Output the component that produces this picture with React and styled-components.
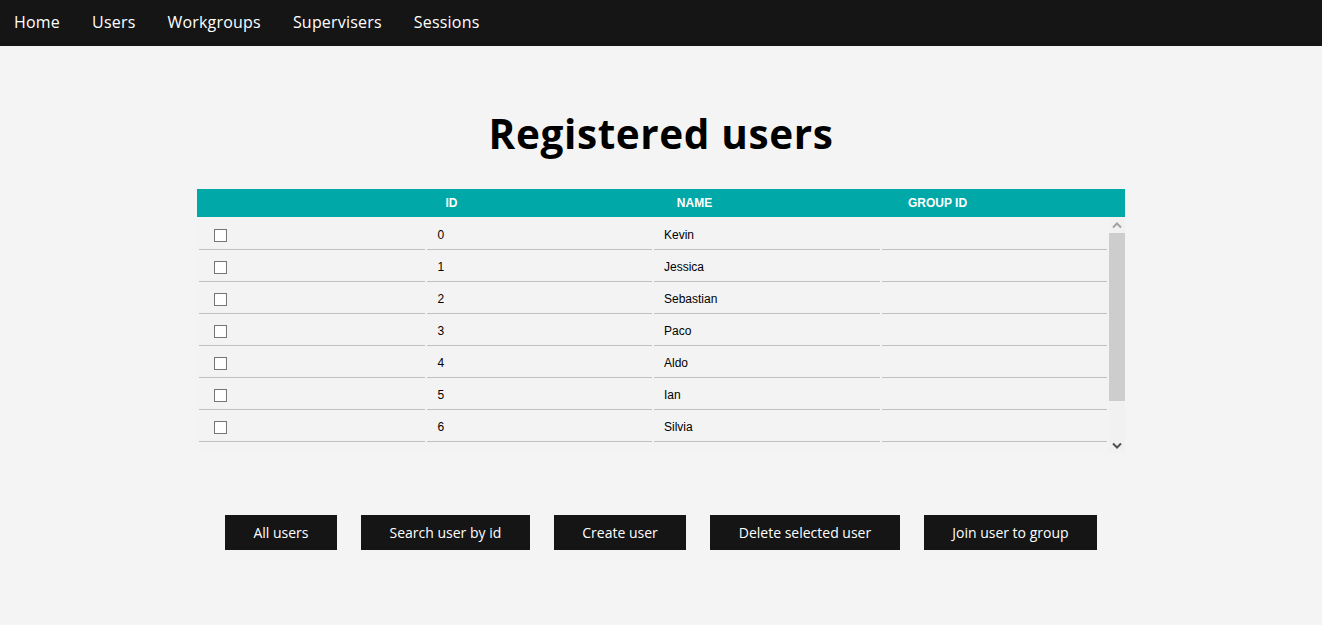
import styled, { createGlobalStyle } from "styled-components";

const GlobalStyle = createGlobalStyle`
  body {
    margin: 0;
    background: #f4f4f4;
    font-family: "Open Sans", "Noto Sans", sans-serif;
  }
`;

const NavBar = styled.nav`
  height: 46px;
  background: #151515;
  display: flex;
  align-items: center;
  padding: 0 0 2px 14px;
  box-sizing: border-box;
`;

const NavLink = styled.a`
  color: #ffffff;
  font-size: 16px;
  letter-spacing: 0.2px;
  margin-right: 32px;
  text-decoration: none;
  cursor: pointer;
`;

const Main = styled.main`
  display: flex;
  flex-direction: column;
  align-items: center;
`;

const Title = styled.h1`
  margin: 62px 0 29px;
  font-size: 40.5px;
  font-weight: 700;
  line-height: 52px;
  color: #000000;
  letter-spacing: 0.6px;
`;

const TableWrap = styled.div`
  width: 928px;
  font-family: "Liberation Sans", Arial, sans-serif;
`;

const HeadRow = styled.div`
  display: grid;
  grid-template-columns: 133px 243px 243px 243px 1fr;
  height: 28px;
  align-items: center;
  background: #00a8a8;
  color: #ffffff;
  font-size: 12px;
  font-weight: 700;
  text-align: center;
`;

const Body = styled.div`
  display: flex;
  height: 236px;
  background: #f3f3f3;
`;

const Scroller = styled.div`
  flex: 1;
  overflow-y: scroll;
  scrollbar-width: none;
  &::-webkit-scrollbar {
    display: none;
  }
`;

const Rail = styled.div`
  width: 16px;
  display: flex;
  flex-direction: column;
  background: #f1f1f1;
`;

const RailButton = styled.div`
  height: 16px;
  display: flex;
  align-items: center;
  justify-content: center;
`;

const Thumb = styled.div`
  height: 168px;
  background: #cdcdcd;
`;

const Spacer = styled.div`
  flex: 1;
`;

const Table = styled.table`
  width: 100%;
  margin-top: 1px;
  border-spacing: 2px;
  font-size: 12px;
  color: #000;
`;

const Cell = styled.td`
  height: 29px;
  padding: 0 0 0 ${(p) => p.$pad || 10}px;
  border-bottom: 1px solid #c0c0c0;
  width: 25%;
  vertical-align: middle;
`;

const Box = styled.input`
  width: 13px;
  height: 13px;
  margin: 1px 0 0 2px;
  appearance: none;
  border: 1px solid #767676;
  border-radius: 0;
  background: #fff;
  display: block;
`;

const Actions = styled.div`
  display: flex;
  gap: 24px;
  margin-top: 62px;
`;

const Button = styled.button`
  height: 35px;
  padding: 0 28.5px;
  background: #151515;
  color: #ffffff;
  border: none;
  font-family: "Open Sans", "Noto Sans", sans-serif;
  font-size: 14px;
  cursor: pointer;
`;

const Chevron = ({ dir, color }) => (
  <svg width="10" height="7" viewBox="0 0 10 7">
    <path
      d={dir === "up" ? "M1 5.5 5 1.5l4 4" : "M1 1.5l4 4 4-4"}
      fill="none"
      stroke={color}
      strokeWidth="2"
    />
  </svg>
);

const users = [
  "Kevin",
  "Jessica",
  "Sebastian",
  "Paco",
  "Aldo",
  "Ian",
  "Silvia",
  "Adrian",
  "Laura",
];

export default function App() {
  return (
    <>
      <GlobalStyle />
      <NavBar>
        {["Home", "Users", "Workgroups", "Supervisers", "Sessions"].map((n) => (
          <NavLink key={n}>{n}</NavLink>
        ))}
      </NavBar>
      <Main>
        <Title>Registered users</Title>
        <TableWrap>
          <HeadRow>
            <span />
            <span>ID</span>
            <span>NAME</span>
            <span>GROUP ID</span>
            <span />
          </HeadRow>
          <Body>
            <Scroller>
              <Table>
                <tbody>
                  {users.map((name, i) => (
                    <tr key={i}>
                      <Cell $pad={13}>
                        <Box type="checkbox" />
                      </Cell>
                      <Cell $pad={11}>{i}</Cell>
                      <Cell>{name}</Cell>
                      <Cell />
                    </tr>
                  ))}
                </tbody>
              </Table>
            </Scroller>
            <Rail>
              <RailButton>
                <Chevron dir="up" color="#a3a3a3" />
              </RailButton>
              <Thumb />
              <Spacer />
              <RailButton>
                <Chevron dir="down" color="#505050" />
              </RailButton>
            </Rail>
          </Body>
        </TableWrap>
        <Actions>
          <Button>All users</Button>
          <Button>Search user by id</Button>
          <Button>Create user</Button>
          <Button>Delete selected user</Button>
          <Button>Join user to group</Button>
        </Actions>
      </Main>
    </>
  );
}
